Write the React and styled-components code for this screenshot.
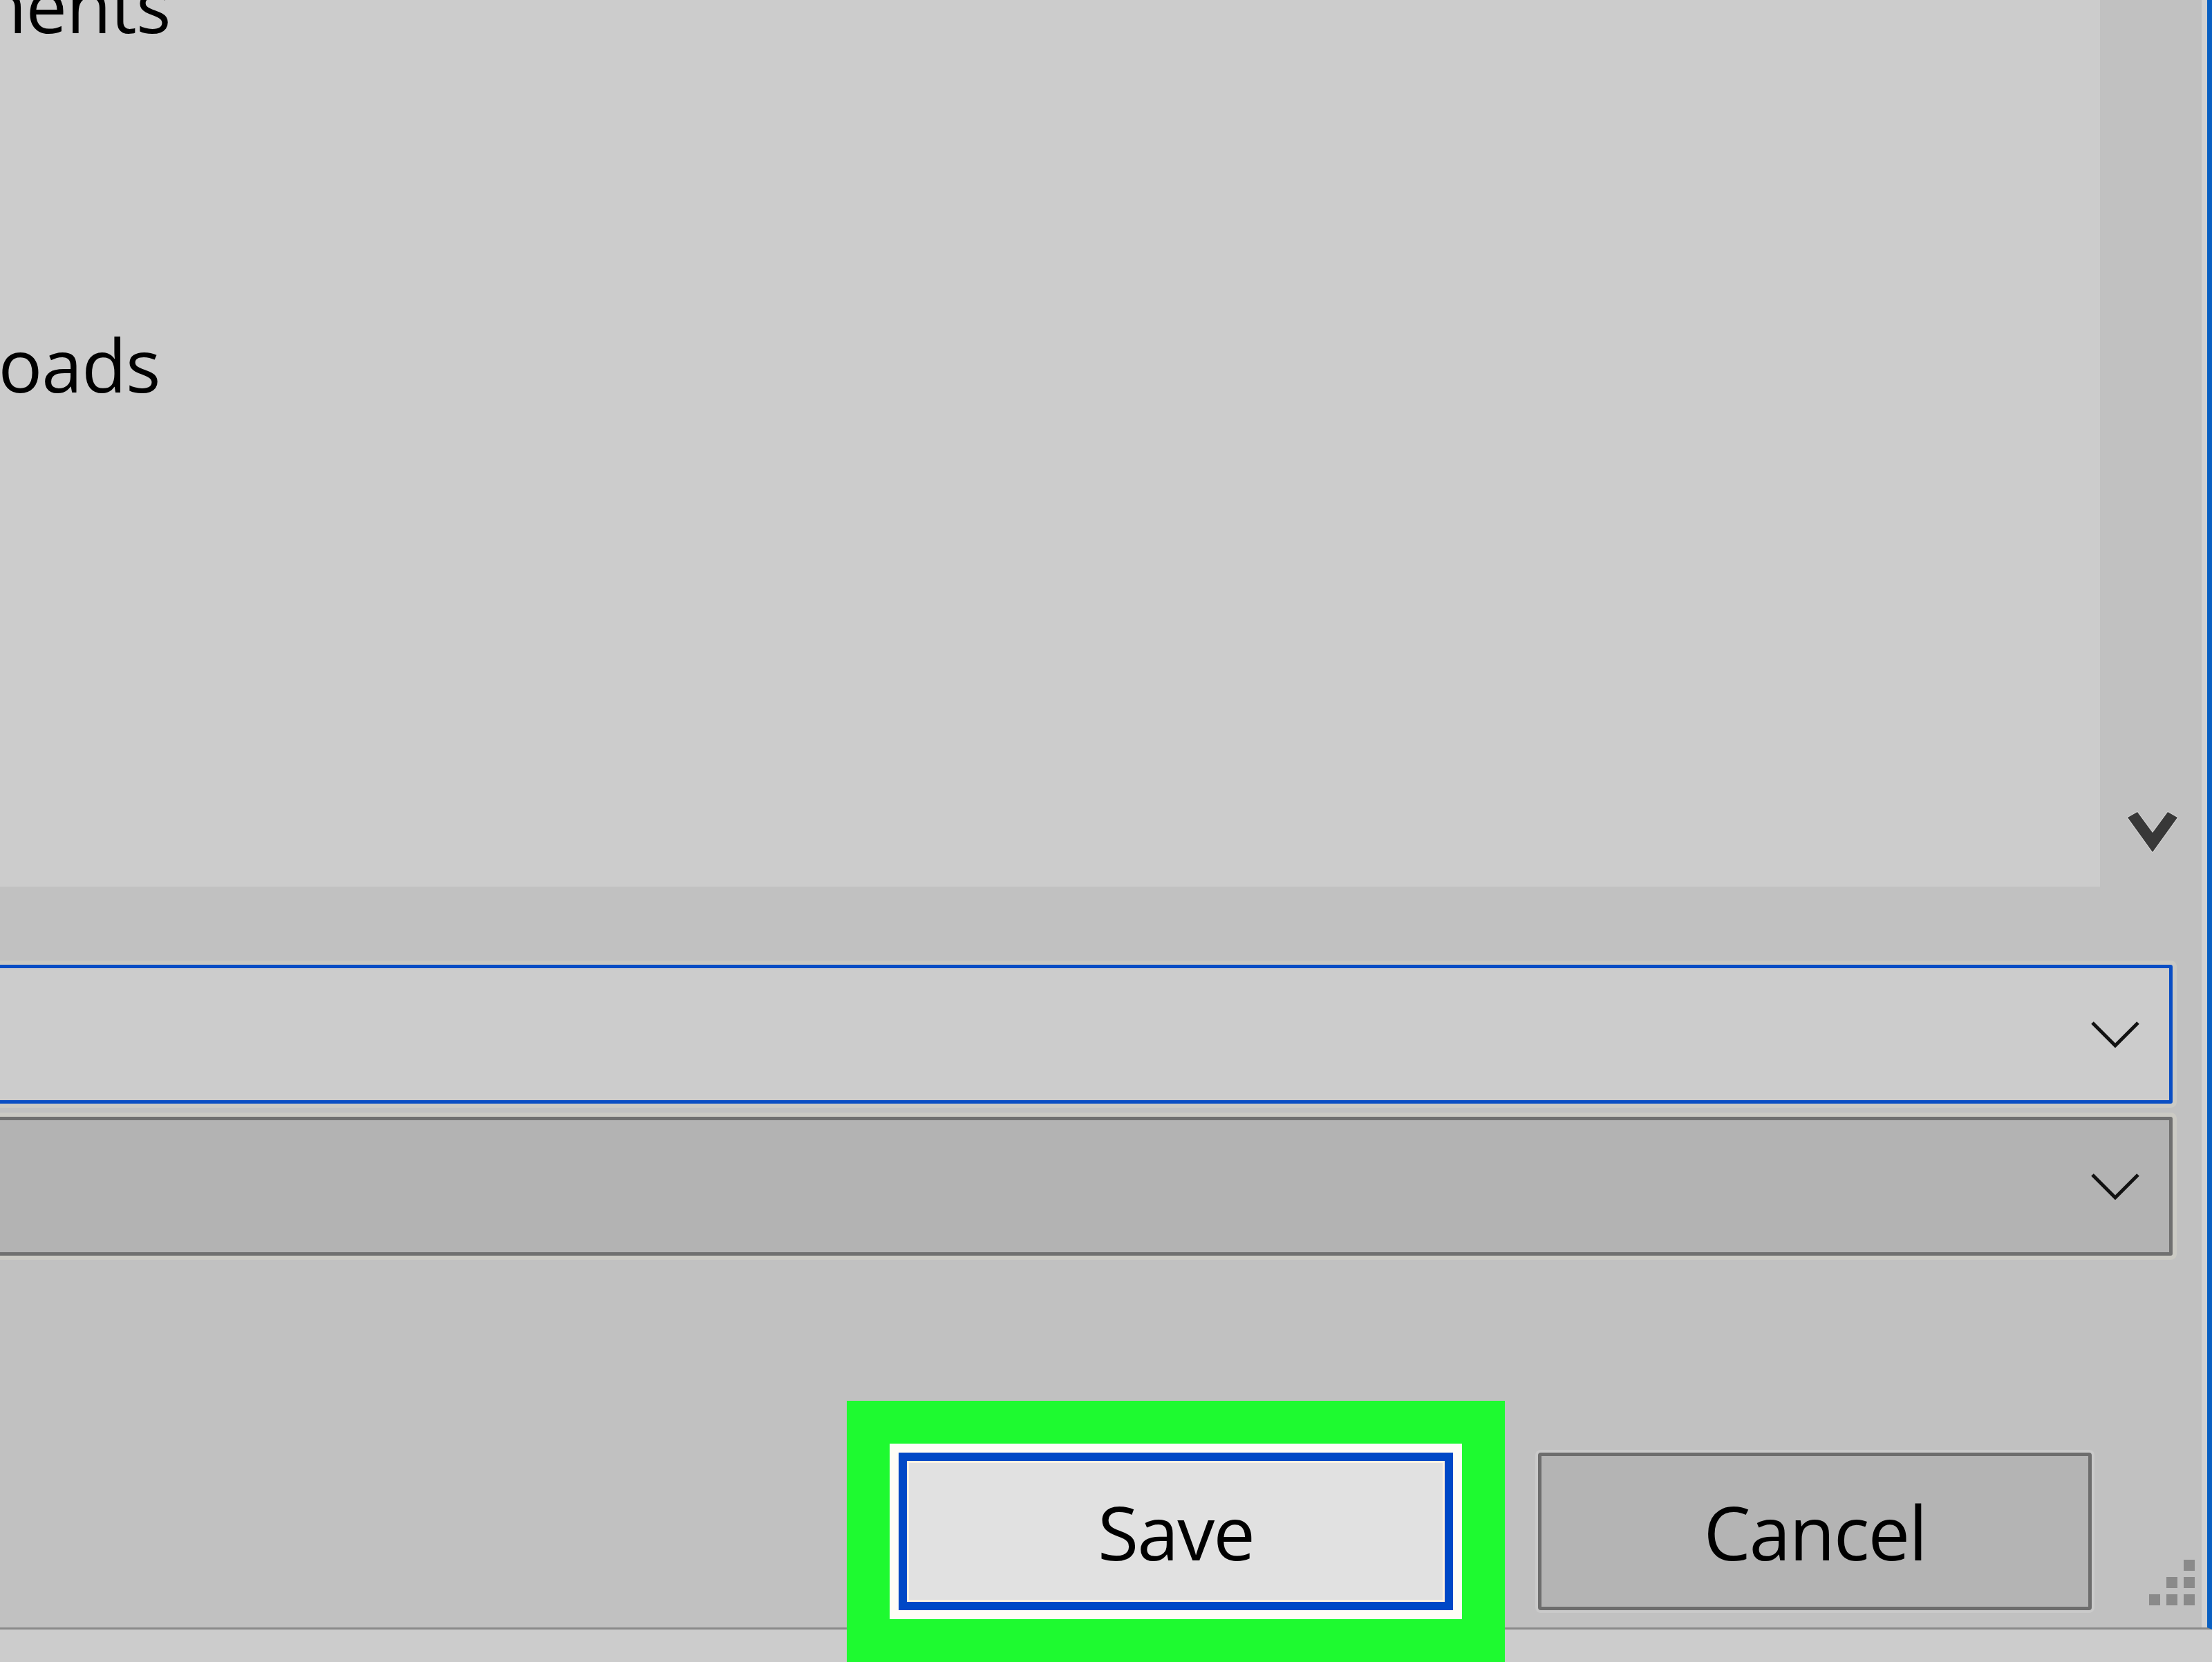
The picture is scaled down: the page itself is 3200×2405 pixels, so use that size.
import React from 'react'
import styled, { createGlobalStyle } from 'styled-components'

const GlobalStyle = createGlobalStyle`
  html, body {
    margin: 0;
    padding: 0;
    background: #cccccc;
  }
  body {
    width: 3200px;
    height: 2405px;
    overflow: hidden;
    font-family: "Open Sans", "Noto Sans", sans-serif;
    color: #000;
  }
`

const ScrollChevron = () => (
  <svg width="74" height="60" viewBox="0 0 74 60">
    <path d="M1 9 L15 1 L37 31 L59 1 L73 9 L37 59 Z" fill="#383838" stroke="#d6d6d6" strokeWidth="2" strokeLinejoin="round" paintOrder="stroke" />
  </svg>
)

const SelectChevron = () => (
  <svg width="70" height="38" viewBox="0 0 70 38">
    <polyline points="2,2 35,35 68,2" fill="none" stroke="#111" strokeWidth="5" />
  </svg>
)

const App = () => {
  const grip = [[2, 0], [1, 1], [2, 1], [0, 2], [1, 2], [2, 2]]
  return (
    <>
      <GlobalStyle />
      <Dialog>
        <Body>
          {/* folder list + scrollbar */}
          <TopArea>
            <ListPane>
              <NavList>
                <NavItem>Documents</NavItem>
                <NavItem>Downloads</NavItem>
              </NavList>
            </ListPane>
            <ScrollColumn>
              <ScrollChevron />
            </ScrollColumn>
          </TopArea>

          {/* file name / save as type */}
          <Fields>
            <Select focused>
              <SelectChevron />
            </Select>
            <Select>
              <SelectChevron />
            </Select>
          </Fields>

          {/* buttons */}
          <Footer>
            <SaveButton type="button">Save</SaveButton>
            <CancelButton type="button">Cancel</CancelButton>
            <Grip>
              {grip.map(([c, r]) => (
                <GripDot key={`${c}-${r}`} style={{ gridColumn: c + 1, gridRow: r + 1 }} />
              ))}
            </Grip>
          </Footer>
        </Body>
      </Dialog>
    </>
  )
}

const Dialog = styled.div`
  width: 3200px;
  height: 2358px;
  box-sizing: border-box;
  display: flex;
  border-right: 7px solid #0a60c2;
  border-bottom: 3px solid #8a8a8a;
`

const Body = styled.div`
  flex: 1;
  min-width: 0;
  display: flex;
  flex-direction: column;
  background: #c1c1c1;
  border-right: 8px solid #d2d2d2;
`

const TopArea = styled.div`
  display: flex;
  height: 1283px;
`

const ListPane = styled.div`
  width: 3038px;
  background: #cccccc;
  overflow: hidden;
`

const NavList = styled.ul`
  list-style: none;
  margin: -58px 0 0 -312px;
  padding: 0;
  display: flex;
  flex-direction: column;
  gap: 390px;
`

const NavItem = styled.li`
  height: 130px;
  line-height: 130px;
  font-size: 106px;
  letter-spacing: -1px;
  white-space: nowrap;
`

const ScrollColumn = styled.div`
  flex: 1;
  display: flex;
  align-items: flex-end;
  justify-content: center;
  padding-bottom: 49px;
  padding-left: 5px;
`

const Fields = styled.div`
  display: flex;
  flex-direction: column;
  gap: 19px;
  padding-top: 113px;
  margin: 0 42px 0 -20px;
`

const Select = styled.div`
  height: 201px;
  box-sizing: border-box;
  display: flex;
  align-items: center;
  justify-content: flex-end;
  padding-right: 43px;
  border: 5px solid ${p => (p.focused ? '#0a4ec4' : '#707070')};
  border-radius: 3px;
  background: ${p => (p.focused ? '#cccccc' : '#b3b3b3')};
  box-shadow: 0 0 0 6px #cbcac4;
`

const Footer = styled.div`
  position: relative;
  flex: 1;
  display: flex;
  justify-content: flex-end;
  align-items: flex-start;
  gap: 123px;
  padding: 285px 159px 0 0;
`

const ButtonBase = styled.button`
  width: 802px;
  height: 228px;
  box-sizing: border-box;
  display: flex;
  align-items: center;
  justify-content: center;
  padding: 0;
  font-family: "Open Sans", "Noto Sans", sans-serif;
  font-size: 108px;
  letter-spacing: -2px;
  color: #000;
  cursor: default;
`

const SaveButton = styled(ButtonBase)`
  border: 12px solid #0048c6;
  background: #e1e1e1;
  box-shadow:
    inset 0 0 0 3px #fff1e2,
    0 0 0 13px #fffdf6,
    0 0 0 75px #1efa30;
`

const CancelButton = styled(ButtonBase)`
  width: 801px;
  border: 5px solid #6d6d6d;
  border-radius: 4px;
  background: #b4b4b4;
  box-shadow: 0 0 0 4px #cacaca;
`

const Grip = styled.div`
  position: absolute;
  right: 10px;
  bottom: 32px;
  display: grid;
  grid-template-columns: repeat(3, 16px);
  grid-template-rows: repeat(3, 16px);
  gap: 9px;
`

const GripDot = styled.span`
  background: #8a8a8a;
`

export default App
